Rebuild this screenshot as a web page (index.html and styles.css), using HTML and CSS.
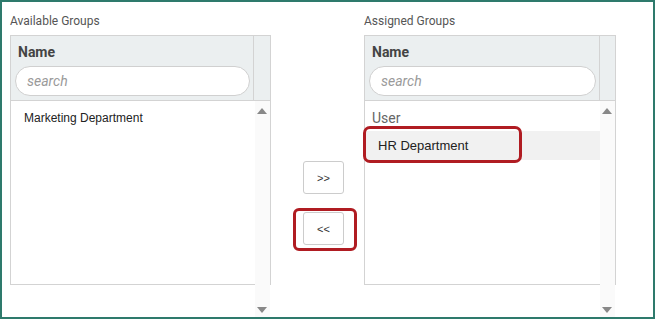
FILE: index.html
```html
<!DOCTYPE html>
<html lang="en">
<head>
    <meta charset="UTF-8">
    <title>Group Assignment</title>
    <link rel="stylesheet" href="styles.css">
</head>
<body>
    <div class="frame">
        <div class="picker">
            <section class="group group-left">
                <div class="group-title">Available Groups</div>
                <div class="grid">
                    <div class="grid-head">
                        <div class="head-cell">
                            <div class="col-name">Name</div>
                            <input class="search" type="text" placeholder="search">
                        </div>
                        <div class="head-spacer"></div>
                    </div>
                    <div class="grid-body">
                        <div class="row">Marketing Department</div>
                    </div>
                    <div class="scrollbar">
                        <span class="arrow up"></span>
                        <span class="arrow down"></span>
                    </div>
                </div>
            </section>

            <div class="mover">
                <button class="move-btn move-right">&gt;&gt;</button>
                <div class="callout-btn">
                    <button class="move-btn">&lt;&lt;</button>
                </div>
            </div>

            <section class="group group-right">
                <div class="group-title">Assigned Groups</div>
                <div class="grid">
                    <div class="grid-head">
                        <div class="head-cell">
                            <div class="col-name">Name</div>
                            <input class="search" type="text" placeholder="search">
                        </div>
                        <div class="head-spacer"></div>
                    </div>
                    <div class="grid-body">
                        <div class="row-group">User</div>
                        <div class="row selected">HR Department</div>
                        <div class="callout-row"></div>
                    </div>
                    <div class="scrollbar">
                        <span class="arrow up"></span>
                        <span class="arrow down"></span>
                    </div>
                </div>
            </section>
        </div>
    </div>
</body>
</html>
```

FILE: styles.css
```css
* {
    box-sizing: border-box;
}
body {
    margin: 0;
    font-family: Roboto, "Liberation Sans", Arial, sans-serif;
}
.frame {
    width: 655px;
    height: 319px;
    border: 2px solid #2e7a6c;
    padding: 11px 8px 0 8px;
    background: #fff;
    overflow: hidden;
}
.picker {
    display: flex;
    align-items: flex-start;
}
.group-left {
    width: 261px;
}
.group-right {
    width: 252px;
}
.group-title {
    font-size: 12px;
    line-height: 16px;
    color: #555;
    margin-bottom: 6px;
}
.grid {
    position: relative;
    height: 250px;
    border: 1px solid #d3d3d3;
}
.grid-head {
    display: flex;
    height: 65px;
    background: #ebeff0;
    border-bottom: 1px solid #d3d3d3;
}
.head-cell {
    flex: 1;
    border-right: 1px solid #d3d3d3;
    padding: 8px 3px 0 4px;
}
.group-left .head-spacer {
    width: 16px;
}
.group-right .head-spacer {
    width: 15px;
}
.col-name {
    font-weight: bold;
    font-size: 14px;
    line-height: 17px;
    color: #444;
    padding-left: 3px;
    margin-bottom: 5px;
}
.search {
    display: block;
    width: 100%;
    height: 30px;
    border: 1px solid #d0d0d0;
    border-radius: 15px;
    background: #fff;
    padding: 0 11px;
    font-family: Roboto, sans-serif;
    font-size: 14px;
    font-style: italic;
    color: #333;
    outline: none;
}
.search::placeholder {
    color: #9a9a9a;
}
.grid-body {
    position: relative;
}
.row {
    height: 30px;
    line-height: 30px;
    padding-left: 13px;
    font-family: "Liberation Sans", Arial, sans-serif;
    font-size: 12px;
    color: #222;
}
.group-left .row {
    height: 34px;
    line-height: 34px;
}
.group-right .row {
    font-size: 13px;
}
.row-group {
    height: 30px;
    line-height: 34px;
    padding-left: 7px;
    font-size: 14px;
    color: #666;
}
.row.selected {
    background: #f1f1f1;
    height: 29px;
    line-height: 29px;
    margin-right: 7px;
}
.callout-row {
    position: absolute;
    left: -2px;
    top: 25px;
    width: 159px;
    height: 37px;
    border: 3px solid #b01c22;
    border-radius: 7px;
}
.scrollbar {
    position: absolute;
    top: 65px;
    right: 0;
    width: 15px;
    height: 217px;
    background: #fafafa;
}
.arrow {
    position: absolute;
    left: 2px;
    width: 0;
    height: 0;
    border-left: 5px solid transparent;
    border-right: 5px solid transparent;
}
.arrow.up {
    top: 7px;
    border-bottom: 6px solid #888;
}
.arrow.down {
    bottom: 5px;
    border-top: 6px solid #888;
}
.mover {
    width: 93px;
    display: flex;
    flex-direction: column;
    align-items: flex-start;
    padding-top: 148px;
}
.move-btn {
    width: 41px;
    height: 33px;
    background: #fff;
    border: 1px solid #ccc;
    border-radius: 3px;
    font-family: "Liberation Sans", Arial, sans-serif;
    font-size: 11px;
    color: #333;
    padding: 0;
}
.move-right {
    margin-left: 32px;
}
.callout-btn {
    margin-top: 14px;
    margin-left: 22px;
    border: 3px solid #b01c22;
    border-radius: 6px;
    padding: 1px 10px 3px 7px;
}
.callout-btn .move-btn {
    display: block;
}
```
